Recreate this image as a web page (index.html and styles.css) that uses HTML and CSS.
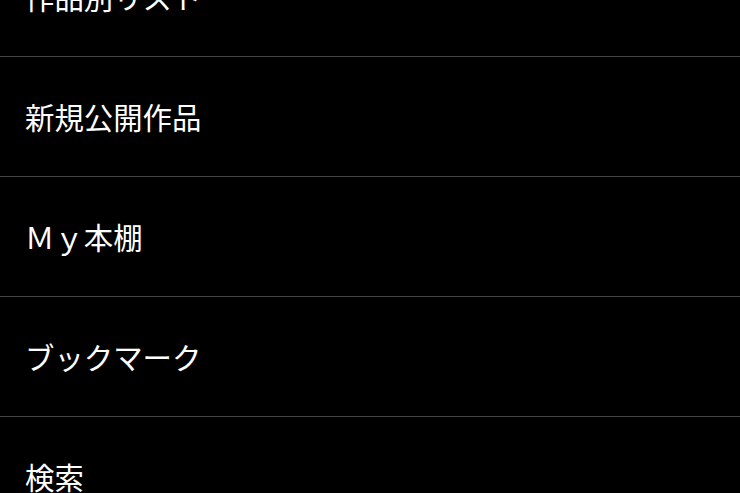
FILE: index.html
```html
<!DOCTYPE html>
<html lang="ja">
<head>
<meta charset="utf-8">
<link rel="stylesheet" href="styles.css">
</head>
<body>
<ul class="menu">
  <li class="item">作品別リスト</li>
  <li class="item">新規公開作品</li>
  <li class="item">Ｍｙ本棚</li>
  <li class="item">ブックマーク</li>
  <li class="item">検索</li>
</ul>
</body>
</html>
```
FILE: styles.css
```css
html, body {
  margin: 0;
  padding: 0;
  background: #000;
  height: 100%;
  overflow: hidden;
}
.menu {
  list-style: none;
  margin: -63px 0 0 0;
  padding: 0;
}
.item {
  height: 119px;
  border-bottom: 1px solid #444;
  display: flex;
  align-items: center;
  padding-left: 25px;
  color: #fff;
  font-family: "Noto Sans CJK JP", "Noto Sans", sans-serif;
  font-size: 29.4px;
  line-height: 1;
}
```
